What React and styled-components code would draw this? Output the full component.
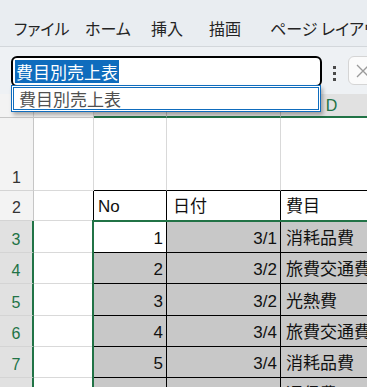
import React from 'react';
import styled, { createGlobalStyle } from 'styled-components';

const GREEN = '#217346';
const GRID = '#d9d9d9';
const JP = '"Noto Sans CJK JP", sans-serif';
const CELL_FONT = '"Liberation Sans", "Noto Sans CJK JP", sans-serif';

const GlobalStyle = createGlobalStyle`
  html, body {
    margin: 0;
    padding: 0;
    background: #ffffff;
    overflow: hidden;
  }
`;

const Shell = styled.div`
  width: 367px;
  height: 387px;
  overflow: hidden;
  display: flex;
  flex-direction: column;
  font-family: ${JP};
`;

const MenuBar = styled.div`
  height: 47px;
  flex: none;
  background: #e9edf1;
  border-bottom: 1px solid #d3d7db;
  display: flex;
  align-items: center;
  padding: 9px 0 0 14px;
  box-sizing: border-box;
  white-space: nowrap;
`;

const MenuItem = styled.span`
  width: ${p => p.$w}px;
  flex: none;
  font-size: 16px;
  color: #242424;
  font-feature-settings: "palt";
`;

const FormulaBar = styled.div`
  position: relative;
  height: 47px;
  flex: none;
  background: #eef1f4;
  display: flex;
  align-items: flex-start;
  padding: 9px 0 0 11px;
  box-sizing: border-box;
`;

const NameBox = styled.div`
  flex: none;
  width: 311px;
  height: 31px;
  box-sizing: border-box;
  border: 2px solid #000;
  border-radius: 6px;
  background: #fff;
  padding: 2px;
  display: flex;
  align-items: stretch;
`;

const Selected = styled.span`
  background: #0f6cbd;
  color: #fff;
  font-size: 17px;
  line-height: 23px;
  padding: 0 1px;
`;

const Kebab = styled.div`
  flex: none;
  width: 3px;
  margin: 10px 0 0 11px;
  display: flex;
  flex-direction: column;
  gap: 3px;
  & > i {
    width: 3px;
    height: 3px;
    background: #4a4a4a;
  }
`;

const CloseBox = styled.div`
  flex: none;
  margin-left: 12px;
  width: 40px;
  height: 29px;
  border: 1px solid #d5d5d5;
  border-radius: 6px;
  background: #fbfbfb;
  display: flex;
  align-items: center;
  padding-left: 6px;
  box-sizing: border-box;
`;

const Dropdown = styled.div`
  position: absolute;
  left: 11px;
  top: 38px;
  width: 310px;
  height: 27px;
  box-sizing: border-box;
  border: 1px solid #0f6cbd;
  padding: 1px;
  background: #fff;
  box-shadow: 2px 3px 4px rgba(0, 0, 0, 0.3);
  z-index: 5;
`;

const DropInner = styled.div`
  height: 100%;
  box-sizing: border-box;
  border: 1px solid #0f6cbd;
  padding-left: 5px;
  font-size: 17px;
  line-height: 21px;
  color: #505050;
`;

const SheetWrap = styled.div`
  position: relative;
`;

const Sheet = styled.div`
  display: grid;
  grid-template-columns: 34px 60px 73px 114px 102px;
  grid-template-rows: 24px 73px 30px 32px 31px 32px 31px 31px 31px;
  background: #fff;
`;

const ColHead = styled.div`
  background: ${p => (p.$sel ? '#e1e1e1' : '#f3f3f3')};
  color: ${p => (p.$sel ? GREEN : '#444')};
  border-right: 1px solid ${p => (p.$sel ? '#b8b8b8' : '#cfcfcf')};
  border-bottom: ${p => (p.$sel ? `2px solid ${GREEN}` : '1px solid #c6c6c6')};
  box-sizing: border-box;
  font-family: ${CELL_FONT};
  font-size: 16px;
  line-height: 18px;
  display: flex;
  align-items: flex-end;
  justify-content: center;
  padding-bottom: 1px;
`;

const RowHead = styled.div`
  background: ${p => (p.$sel ? '#e1e1e1' : '#f3f3f3')};
  color: ${p => (p.$sel ? GREEN : '#333')};
  border-right: ${p => (p.$sel ? `2px solid ${GREEN}` : '1px solid #c6c6c6')};
  border-bottom: 1px solid #d4d4d4;
  box-sizing: border-box;
  font-family: ${CELL_FONT};
  font-size: 16px;
  display: flex;
  align-items: flex-end;
  justify-content: center;
  padding-bottom: 3px;
`;

const Cell = styled.div`
  box-sizing: border-box;
  background: ${p => (p.$fill ? '#c8c8c8' : '#fff')};
  border-right: 1px solid ${p => (p.$edgeR ? '#000' : GRID)};
  border-bottom: 1px solid ${p => (p.$edgeB ? '#000' : GRID)};
  font-family: ${CELL_FONT};
  font-size: 17px;
  color: #111;
  display: flex;
  align-items: flex-end;
  justify-content: ${p => (p.$right ? 'flex-end' : 'flex-start')};
  padding: 0 3px 3px ${p => p.$pl || 4}px;
  white-space: nowrap;
  overflow: hidden;
`;

// selection outline lying over B3:D8
const Selection = styled.div`
  position: absolute;
  left: 92px;
  top: 126px;
  right: -4px;
  bottom: -4px;
  border: 2px solid ${GREEN};
  pointer-events: none;
`;

const rows = [
  ['1', '3/1', '消耗品費'],
  ['2', '3/2', '旅費交通費'],
  ['3', '3/2', '光熱費'],
  ['4', '3/4', '旅費交通費'],
  ['5', '3/4', '消耗品費'],
  ['6', '3/5', '通信費'],
];

const menu = [
  ['ファイル', 71],
  ['ホーム', 66],
  ['挿入', 58],
  ['描画', 61],
  ['ページ レイアウト', 120],
];

export default function App() {
  return (
    <Shell>
      <GlobalStyle />
      <MenuBar>
        {menu.map(([m, w]) => <MenuItem key={m} $w={w}>{m}</MenuItem>)}
      </MenuBar>

      <FormulaBar>
        <NameBox>
          <Selected>費目別売上表</Selected>
        </NameBox>
        <Kebab><i /><i /><i /></Kebab>
        <CloseBox>
          <svg width="16" height="16" viewBox="0 0 16 16">
            <path d="M2 2 L14 14 M14 2 L2 14" stroke="#9a9a9a" strokeWidth="1.3" fill="none" />
          </svg>
        </CloseBox>
        <Dropdown>
          <DropInner>費目別売上表</DropInner>
        </Dropdown>
      </FormulaBar>

      <SheetWrap>
        <Sheet>
          <ColHead />
          <ColHead>A</ColHead>
          <ColHead $sel>B</ColHead>
          <ColHead $sel>C</ColHead>
          <ColHead $sel>D</ColHead>

          <RowHead>1</RowHead>
          <Cell />
          <Cell $edgeB />
          <Cell $edgeB />
          <Cell $edgeB />

          <RowHead>2</RowHead>
          <Cell $edgeR />
          <Cell $edgeR $edgeB>No</Cell>
          <Cell $edgeR $edgeB $pl={6}>日付</Cell>
          <Cell $edgeR $edgeB $pl={5}>費目</Cell>

          {rows.map((r, i) => (
            <React.Fragment key={i}>
              <RowHead $sel>{i + 3}</RowHead>
              <Cell $edgeR />
              <Cell $edgeR $edgeB $right $fill={i > 0}>{r[0]}</Cell>
              <Cell $edgeR $edgeB $right $fill>{r[1]}</Cell>
              <Cell $edgeR $edgeB $fill $pl={5}>{r[2]}</Cell>
            </React.Fragment>
          ))}
        </Sheet>
        <Selection />
      </SheetWrap>
    </Shell>
  );
}
